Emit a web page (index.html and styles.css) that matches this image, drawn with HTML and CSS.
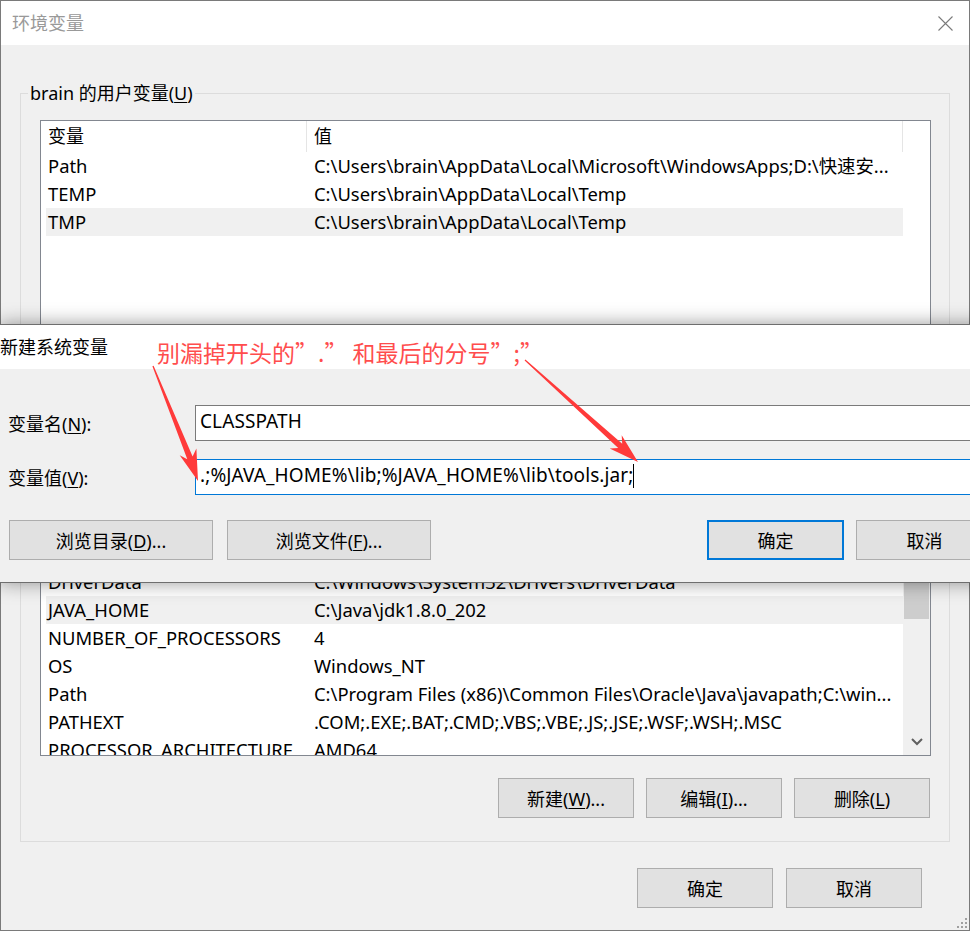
FILE: index.html
```html
<!DOCTYPE html>
<html lang="zh-CN">
<head>
    <meta charset="UTF-8">
    <title>环境变量</title>
    <link rel="stylesheet" href="styles.css">
</head>
<body>
    <div class="window">
        <div class="titlebar">
            <span class="title">环境变量</span>
            <svg class="close" viewBox="0 0 15 15"><path d="M0.5 0.5 L14.5 14.5 M14.5 0.5 L0.5 14.5" stroke="#7a7a7a" stroke-width="1.1" fill="none"/></svg>
        </div>
        <div class="content">
            <fieldset class="group user-group">
                <legend>brain 的用户变量(<u>U</u>)</legend>
                <div class="list user-list">
                    <div class="list-body">
                        <div class="list-head"><span>变量</span><span>值</span></div>
                        <div class="row"><span>Path</span><span>C:\Users\brain\AppData\Local\Microsoft\WindowsApps;D:\快速安...</span></div>
                        <div class="row"><span>TEMP</span><span>C:\Users\brain\AppData\Local\Temp</span></div>
                        <div class="row selected"><span>TMP</span><span>C:\Users\brain\AppData\Local\Temp</span></div>
                    </div>
                </div>
            </fieldset>

            <fieldset class="group sys-group">
                <legend>系统变量(<u>S</u>)</legend>
                <div class="list sys-list">
                    <div class="list-body">
                        <div class="list-head"><span>变量</span><span>值</span></div>
                        <div class="row"><span>DriverData</span><span>C:\Windows\System32\Drivers\DriverData</span></div>
                        <div class="row selected"><span>JAVA_HOME</span><span>C:\Java\jdk1.8.0_202</span></div>
                        <div class="row"><span>NUMBER_OF_PROCESSORS</span><span>4</span></div>
                        <div class="row"><span>OS</span><span>Windows_NT</span></div>
                        <div class="row"><span>Path</span><span>C:\Program Files (x86)\Common Files\Oracle\Java\javapath;C:\win...</span></div>
                        <div class="row"><span>PATHEXT</span><span>.COM;.EXE;.BAT;.CMD;.VBS;.VBE;.JS;.JSE;.WSF;.WSH;.MSC</span></div>
                        <div class="row"><span>PROCESSOR_ARCHITECTURE</span><span>AMD64</span></div>
                    </div>
                    <div class="scrollbar">
                        <div class="scroll-btn"></div>
                        <div class="thumb" style="height: 55px;"></div>
                        <div class="scroll-btn down">
                            <svg viewBox="0 0 12 8" width="12" height="8"><path d="M1 1 L6 6 L11 1" stroke="#606060" stroke-width="2" fill="none"/></svg>
                        </div>
                    </div>
                </div>
                <div class="group-buttons">
                    <button>新建(<u>W</u>)...</button>
                    <button>编辑(<u>I</u>)...</button>
                    <button>删除(<u>L</u>)</button>
                </div>
            </fieldset>

            <div class="footer">
                <button>确定</button>
                <button>取消</button>
            </div>
        </div>
        <svg class="grip" viewBox="0 0 12 12" width="12" height="12">
            <g fill="#a0a0a0">
                <rect x="10" y="2" width="2" height="2"/>
                <rect x="6" y="6" width="2" height="2"/><rect x="10" y="6" width="2" height="2"/>
                <rect x="2" y="10" width="2" height="2"/><rect x="6" y="10" width="2" height="2"/><rect x="10" y="10" width="2" height="2"/>
            </g>
        </svg>
    </div>

    <div class="dialog">
        <div class="dialog-title">新建系统变量</div>
        <div class="dialog-body">
            <div class="field">
                <label>变量名(<u>N</u>):</label>
                <div class="input">CLASSPATH</div>
            </div>
            <div class="field">
                <label>变量值(<u>V</u>):</label>
                <div class="input focused">.;%JAVA_HOME%\lib;%JAVA_HOME%\lib\tools.jar;<span class="caret"></span></div>
            </div>
            <div class="dialog-buttons">
                <button class="wide">浏览目录(<u>D</u>)...</button>
                <button class="wide">浏览文件(<u>F</u>)...</button>
                <button class="ok default">确定</button>
                <button class="ok">取消</button>
            </div>
        </div>
    </div>

    <div class="note">别漏掉开头的”.” 和最后的分号”;”</div>
    <svg class="arrows" viewBox="0 0 970 931" width="970" height="931">
        <polygon fill="#ff3a3a" points="153.6,365.8 192.6,456.6 196.4,448.5 198,481 179.7,455.2 187.3,459.3 152.4,366.2"/>
        <polygon fill="#ff3a3a" points="525.4,359.6 622.2,443.7 621.7,435.2 638,462 609.7,448.6 618.2,448.1 524.6,360.4"/>
    </svg>
</body>
</html>
```

FILE: styles.css
```css
body {
    margin: 0;
    width: 970px;
    height: 931px;
    overflow: hidden;
    position: relative;
    background: #8a8f96;
    font-family: "Noto Sans", "Noto Sans CJK SC", sans-serif;
    font-size: 18px;
    color: #000;
}
u {
    text-underline-offset: 2px;
}
.window {
    position: relative;
    width: 970px;
    height: 931px;
    box-sizing: border-box;
    border: 1px solid #7a7a7a;
    background: #f0f0f0;
}
.titlebar {
    height: 44px;
    background: #fff;
    display: flex;
    align-items: center;
    justify-content: space-between;
    padding: 0 16px 0 11px;
}
.title {
    color: #999;
    line-height: 24px;
}
.close {
    width: 15px;
    height: 15px;
}
.content {
    padding: 0 19px;
}
.group {
    margin: 0;
    padding: 15px 18px 15px 19px;
    border: 1px solid #dcdcdc;
    min-width: 0;
}
.user-group {
    margin-top: 36px;
}
.sys-group {
    margin-top: 4px;
    padding-top: 72px;
    padding-bottom: 23px;
}
.group legend {
    padding: 0 2px;
    margin-left: -12px;
    line-height: 24px;
}
.list {
    border: 1px solid #828790;
    background: #fff;
    box-sizing: border-box;
    overflow: hidden;
}
.user-list {
    height: 300px;
}
.sys-list {
    height: 220px;
    display: flex;
}
.list-body {
    margin-left: 5px;
    width: 857px;
    flex: none;
}
.list-head {
    display: grid;
    grid-template-columns: 261px 1fr;
    height: 31px;
    line-height: 31px;
}
.list-head span {
    border-right: 1px solid #e5e5e5;
}
.list-head span:first-child {
    padding-left: 2px;
}
.list-head span:last-child {
    padding-left: 7px;
}
.row {
    display: grid;
    grid-template-columns: 268px 1fr;
    height: 28px;
    line-height: 28px;
    font-size: 18.4px;
    white-space: nowrap;
    overflow: hidden;
}
.row span:first-child {
    padding-left: 2px;
}
.row.selected {
    background: #f0f0f0;
}
.scrollbar {
    width: 27px;
    background: #f0f0f0;
    display: flex;
    flex-direction: column;
}
.scroll-btn {
    height: 27px;
    flex: none;
    display: flex;
    align-items: center;
    justify-content: center;
}
.scroll-btn.down {
    margin-top: auto;
}
.thumb {
    margin: 0 1px;
    background: #cdcdcd;
}
button {
    height: 40px;
    width: 136px;
    box-sizing: border-box;
    background: #e1e1e1;
    border: 1px solid #adadad;
    font: inherit;
    color: #000;
    padding: 0;
}
.group-buttons {
    display: flex;
    justify-content: flex-end;
    gap: 12px;
    margin: 22px 1px 0 0;
}
.footer {
    display: flex;
    justify-content: flex-end;
    gap: 13px;
    margin-top: 26px;
    padding-right: 28px;
}
.grip {
    position: absolute;
    right: 2px;
    bottom: 2px;
}

/* 新建系统变量 */
.dialog {
    position: absolute;
    left: -1px;
    top: 324px;
    width: 1002px;
    border: 1px solid #6e6e6e;
    background: #f0f0f0;
    box-shadow: 0 0 18px rgba(0, 0, 0, 0.4);
}
.dialog-title {
    height: 44px;
    line-height: 44px;
    background: #fff;
}
.dialog-body {
    padding: 36px 9px 22px 8px;
}
.field {
    display: flex;
    align-items: center;
}
.field + .field {
    margin-top: 18px;
}
.field label {
    width: 187px;
    flex: none;
}
.input {
    flex: 1;
    height: 36px;
    box-sizing: border-box;
    border: 1px solid #7a7a7a;
    background: #fff;
    padding: 0 4px;
    font-size: 19px;
    letter-spacing: 0.1px;
    line-height: 31px;
    white-space: nowrap;
}
.input.focused {
    border-color: #0078d7;
}
.caret {
    display: inline-block;
    width: 1px;
    height: 24px;
    background: #000;
    vertical-align: -6px;
}
.dialog-buttons {
    display: flex;
    gap: 14px;
    margin: 25px 0 0 1px;
}
.dialog-buttons .wide {
    width: 204px;
}
.dialog-buttons .ok {
    width: 137px;
}
.dialog-buttons .default {
    margin-left: auto;
    margin-right: -2px;
    border: 2px solid #0078d7;
}

/* 标注 */
.note {
    position: absolute;
    left: 157px;
    top: 337px;
    color: #ff4d4d;
    font-family: "Noto Sans CJK SC", sans-serif;
    font-size: 23px;
    line-height: 30px;
    white-space: nowrap;
}
.arrows {
    position: absolute;
    left: 0;
    top: 0;
    pointer-events: none;
}
```
